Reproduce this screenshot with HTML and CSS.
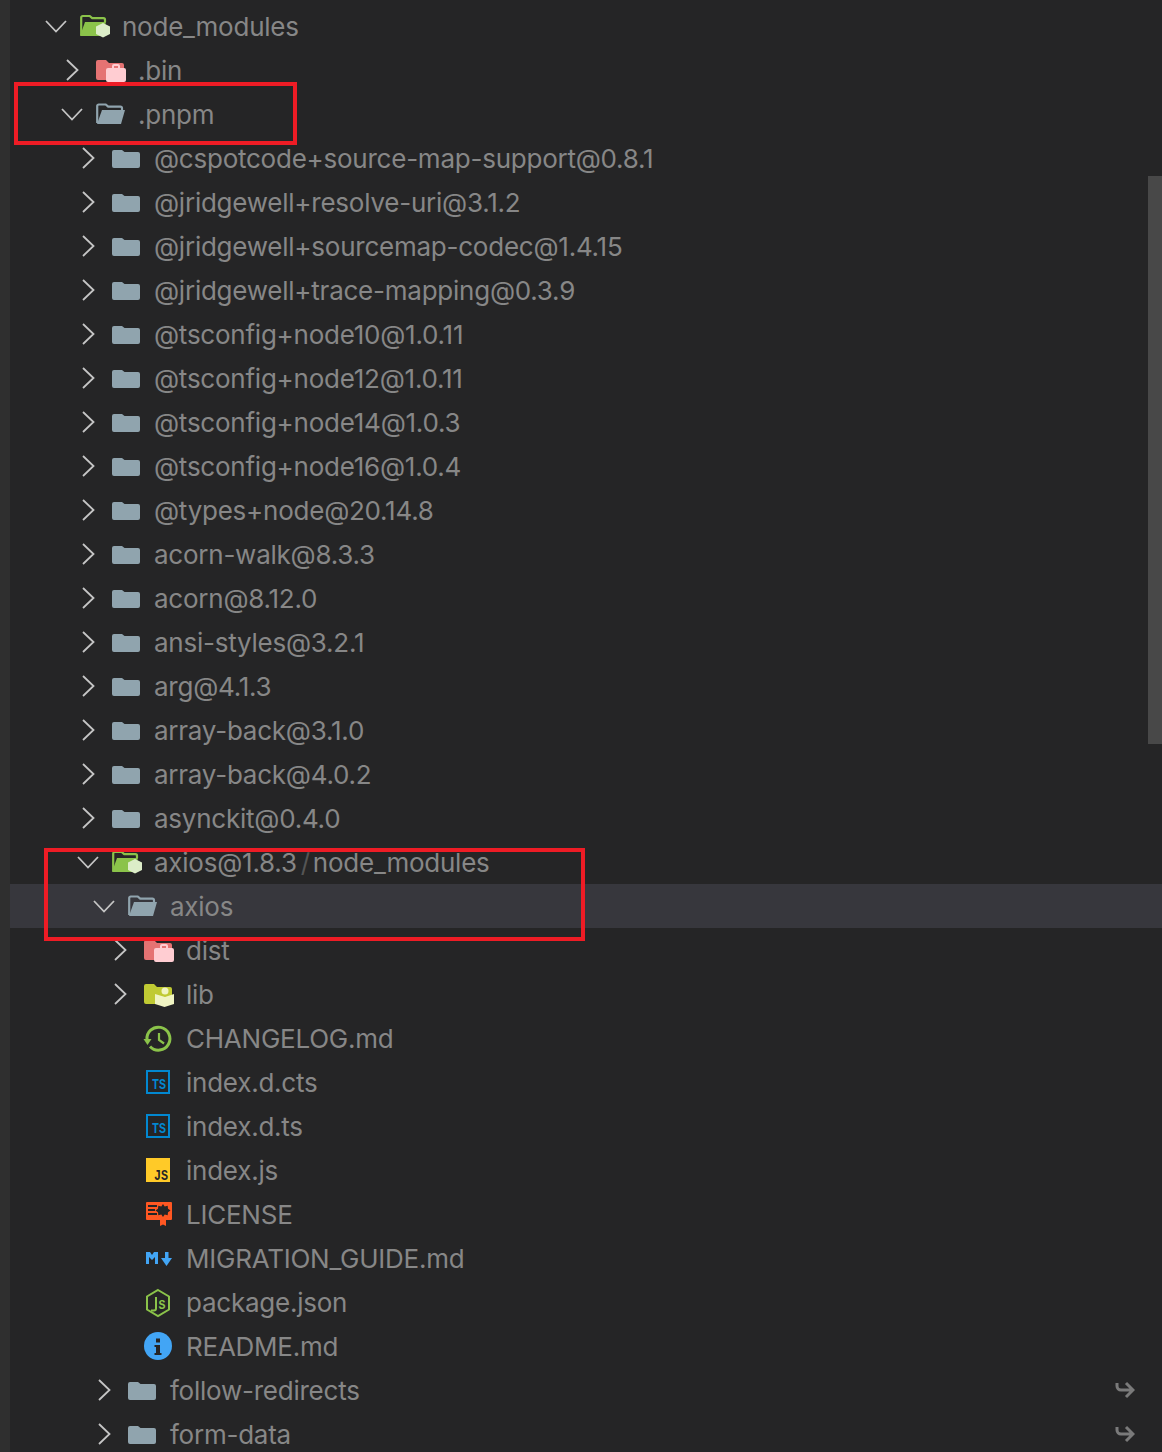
FILE: index.html
```html
<!DOCTYPE html>
<html lang="en">
<head>
<meta charset="utf-8">
<title>Explorer</title>
<link rel="stylesheet" href="styles.css">
</head>
<body>
<svg class="defs" width="0" height="0" aria-hidden="true">
  <symbol id="chev-r" viewBox="0 0 24 24"><path d="M7 2l10.500 10L7 22" fill="none" stroke="currentColor" stroke-width="1.800"/></symbol>
  <symbol id="chev-d" viewBox="0 0 24 24"><path d="M2 7l10 10.500L22 7" fill="none" stroke="currentColor" stroke-width="1.800"/></symbol>
  <symbol id="folder" viewBox="0 0 32 32"><path d="M4 8h8l2.500 2H28a2 2 0 0 1 2 2v12a2 2 0 0 1-2 2H4a2 2 0 0 1-2-2V10a2 2 0 0 1 2-2z" fill="#90a4ae"/></symbol>
  <symbol id="folder-open" viewBox="0 0 32 32"><path d="M3.200 25V8a1.500 1.500 0 0 1 1.500-1.500h7l2.500 2.200h12.300a1.500 1.500 0 0 1 1.500 1.500V12" fill="none" stroke="#90a4ae" stroke-width="2.200"/><path d="M8 12h23l-4 14H3z" fill="#90a4ae"/></symbol>
  <symbol id="node-open" viewBox="0 0 32 32"><path d="M3.200 25V7.500A1.500 1.500 0 0 1 4.700 6h7l2.500 2.200h11.300a1.500 1.500 0 0 1 1.500 1.500V12" fill="none" stroke="#8bc34a" stroke-width="2.200"/><path d="M7 12h21l-4 14H2z" fill="#8bc34a"/><path d="M25 13l7 3.500v7.500L25 27.500 18 24v-7.500z" fill="#dcedc8"/></symbol>
  <symbol id="folder-red" viewBox="0 0 32 32"><path d="M4 6h8l3 3h13a2 2 0 0 1 2 2v13a2 2 0 0 1-2 2H4a2 2 0 0 1-2-2V8a2 2 0 0 1 2-2z" fill="#e57373"/><path d="M18 14v-2a2 2 0 0 1 2-2h4a2 2 0 0 1 2 2v2h4a2 2 0 0 1 2 2v10a2 2 0 0 1-2 2H14a2 2 0 0 1-2-2V16a2 2 0 0 1 2-2zm2 0h4v-2h-4z" fill="#ffcdd2" fill-rule="evenodd"/></symbol>
  <symbol id="folder-lib" viewBox="0 0 32 32"><path d="M4 6h8l3 3h13a2 2 0 0 1 2 2v13a2 2 0 0 1-2 2H4a2 2 0 0 1-2-2V8a2 2 0 0 1 2-2z" fill="#c0ca33"/><path d="M13 16l10 3 9-3v10l-9.500 3L13 26z" fill="#f0f4c3"/><circle cx="23" cy="13" r="3.500" fill="#f0f4c3"/></symbol>
  <symbol id="history" viewBox="0 0 32 32"><path d="M5 18A11.500 11.500 0 1 1 8 24.500" fill="none" stroke="#8bc34a" stroke-width="3"/><path d="M1.500 17h8l-4 6z" fill="#8bc34a"/><path d="M17 11v7l5 3.500" fill="none" stroke="#8bc34a" stroke-width="2.200"/></symbol>
  <symbol id="ts-box" viewBox="0 0 32 32"><rect x="5" y="5" width="22" height="22" fill="none" stroke="#0288d1" stroke-width="2"/></symbol>
  <symbol id="js-box" viewBox="0 0 32 32"><rect x="4" y="4" width="24" height="24" fill="#ffca28"/></symbol>
  <symbol id="license" viewBox="0 0 32 32"><path d="M5 4h24a1 1 0 0 1 1 1v16a1 1 0 0 1-1 1h-5v6l-3-1.500-3 1.500v-6H5a1 1 0 0 1-1-1V5a1 1 0 0 1 1-1z" fill="#ff5722"/><path d="M6 7h9v2H6zm0 4h7v2H6zm0 4h9v2H6z" fill="#252526"/><path d="M21 6l1.700 2.500 3-.7.300 3 2.500 1.700-2.500 1.700-.3 3-3-.7L21 19l-1.700-2.500-3 .7-.3-3-2.500-1.700L16 10.800l.3-3 3 .7z" fill="#252526"/></symbol>
  <symbol id="md" viewBox="0 0 32 32"><path d="M4 10h4l2 3 2-3h4v12h-3v-7l-3 3-3-3v7H4z" fill="#42a5f5"/><path d="M23 10h3.500v6H30l-5.500 8-5.500-8h4z" fill="#42a5f5"/></symbol>
  <symbol id="pkg" viewBox="0 0 32 32"><path d="M16 4l11 6.500v13L16 30 5 23.500v-13z" fill="none" stroke="#8bc34a" stroke-width="2"/><path d="M14 11v11.500a2 2 0 0 1-2 2H9" fill="none" stroke="#8bc34a" stroke-width="2"/></symbol>
  <symbol id="info" viewBox="0 0 32 32"><circle cx="16" cy="16" r="14" fill="#42a5f5"/><rect x="14" y="8.500" width="4" height="4" fill="#252526"/><path d="M12.500 15H18v8h1.500v2h-7v-2H14v-6h-1.500z" fill="#252526"/></symbol>
  <symbol id="link" viewBox="0 0 20 18"><path d="M2 2v3a4 4 0 0 0 4 4h11M11 2l7 7-7 7" fill="none" stroke="currentColor" stroke-width="3"/></symbol>
</svg>

<div class="window">
  <div class="edge"></div>
  <ul class="tree">
    <li class="row d0"><svg class="chev"><use href="#chev-d"/></svg><svg class="icon"><use href="#node-open"/></svg><span class="name">node_modules</span></li>
    <li class="row d1"><svg class="chev"><use href="#chev-r"/></svg><svg class="icon"><use href="#folder-red"/></svg><span class="name">.bin</span></li>
    <li class="row d1"><svg class="chev"><use href="#chev-d"/></svg><svg class="icon"><use href="#folder-open"/></svg><span class="name">.pnpm</span></li>
    <li class="row d2"><svg class="chev"><use href="#chev-r"/></svg><svg class="icon"><use href="#folder"/></svg><span class="name">@cspotcode+source-map-support@0.8.1</span></li>
    <li class="row d2"><svg class="chev"><use href="#chev-r"/></svg><svg class="icon"><use href="#folder"/></svg><span class="name">@jridgewell+resolve-uri@3.1.2</span></li>
    <li class="row d2"><svg class="chev"><use href="#chev-r"/></svg><svg class="icon"><use href="#folder"/></svg><span class="name">@jridgewell+sourcemap-codec@1.4.15</span></li>
    <li class="row d2"><svg class="chev"><use href="#chev-r"/></svg><svg class="icon"><use href="#folder"/></svg><span class="name">@jridgewell+trace-mapping@0.3.9</span></li>
    <li class="row d2"><svg class="chev"><use href="#chev-r"/></svg><svg class="icon"><use href="#folder"/></svg><span class="name">@tsconfig+node10@1.0.11</span></li>
    <li class="row d2"><svg class="chev"><use href="#chev-r"/></svg><svg class="icon"><use href="#folder"/></svg><span class="name">@tsconfig+node12@1.0.11</span></li>
    <li class="row d2"><svg class="chev"><use href="#chev-r"/></svg><svg class="icon"><use href="#folder"/></svg><span class="name">@tsconfig+node14@1.0.3</span></li>
    <li class="row d2"><svg class="chev"><use href="#chev-r"/></svg><svg class="icon"><use href="#folder"/></svg><span class="name">@tsconfig+node16@1.0.4</span></li>
    <li class="row d2"><svg class="chev"><use href="#chev-r"/></svg><svg class="icon"><use href="#folder"/></svg><span class="name">@types+node@20.14.8</span></li>
    <li class="row d2"><svg class="chev"><use href="#chev-r"/></svg><svg class="icon"><use href="#folder"/></svg><span class="name">acorn-walk@8.3.3</span></li>
    <li class="row d2"><svg class="chev"><use href="#chev-r"/></svg><svg class="icon"><use href="#folder"/></svg><span class="name">acorn@8.12.0</span></li>
    <li class="row d2"><svg class="chev"><use href="#chev-r"/></svg><svg class="icon"><use href="#folder"/></svg><span class="name">ansi-styles@3.2.1</span></li>
    <li class="row d2"><svg class="chev"><use href="#chev-r"/></svg><svg class="icon"><use href="#folder"/></svg><span class="name">arg@4.1.3</span></li>
    <li class="row d2"><svg class="chev"><use href="#chev-r"/></svg><svg class="icon"><use href="#folder"/></svg><span class="name">array-back@3.1.0</span></li>
    <li class="row d2"><svg class="chev"><use href="#chev-r"/></svg><svg class="icon"><use href="#folder"/></svg><span class="name">array-back@4.0.2</span></li>
    <li class="row d2"><svg class="chev"><use href="#chev-r"/></svg><svg class="icon"><use href="#folder"/></svg><span class="name">asynckit@0.4.0</span></li>
    <li class="row d2"><svg class="chev"><use href="#chev-d"/></svg><svg class="icon"><use href="#node-open"/></svg><span class="name">axios@1.8.3<span class="sep">/</span>node_modules</span></li>
    <li class="row d3 selected"><svg class="chev"><use href="#chev-d"/></svg><svg class="icon"><use href="#folder-open"/></svg><span class="name">axios</span></li>
    <li class="row d4"><svg class="chev"><use href="#chev-r"/></svg><svg class="icon"><use href="#folder-red"/></svg><span class="name">dist</span></li>
    <li class="row d4"><svg class="chev"><use href="#chev-r"/></svg><svg class="icon"><use href="#folder-lib"/></svg><span class="name">lib</span></li>
    <li class="row d4"><span class="chev"></span><svg class="icon"><use href="#history"/></svg><span class="name">CHANGELOG.md</span></li>
    <li class="row d4"><span class="chev"></span><svg class="icon" viewBox="0 0 32 32"><use href="#ts-box"/><text class="glyph glyph-ts" x="10" y="23" textLength="14" lengthAdjust="spacingAndGlyphs">TS</text></svg><span class="name">index.d.cts</span></li>
    <li class="row d4"><span class="chev"></span><svg class="icon" viewBox="0 0 32 32"><use href="#ts-box"/><text class="glyph glyph-ts" x="10" y="23" textLength="14" lengthAdjust="spacingAndGlyphs">TS</text></svg><span class="name">index.d.ts</span></li>
    <li class="row d4"><span class="chev"></span><svg class="icon" viewBox="0 0 32 32"><use href="#js-box"/><text class="glyph glyph-js" x="12" y="26" textLength="14" lengthAdjust="spacingAndGlyphs">JS</text></svg><span class="name">index.js</span></li>
    <li class="row d4"><span class="chev"></span><svg class="icon"><use href="#license"/></svg><span class="name">LICENSE</span></li>
    <li class="row d4"><span class="chev"></span><svg class="icon"><use href="#md"/></svg><span class="name">MIGRATION_GUIDE.md</span></li>
    <li class="row d4"><span class="chev"></span><svg class="icon" viewBox="0 0 32 32"><use href="#pkg"/><text class="glyph glyph-pkg" x="16.500" y="23" textLength="7" lengthAdjust="spacingAndGlyphs">S</text></svg><span class="name">package.json</span></li>
    <li class="row d4"><span class="chev"></span><svg class="icon"><use href="#info"/></svg><span class="name">README.md</span></li>
    <li class="row d3"><svg class="chev"><use href="#chev-r"/></svg><svg class="icon"><use href="#folder"/></svg><span class="name">follow-redirects</span><svg class="link"><use href="#link"/></svg></li>
    <li class="row d3"><svg class="chev"><use href="#chev-r"/></svg><svg class="icon"><use href="#folder"/></svg><span class="name">form-data</span><svg class="link"><use href="#link"/></svg></li>
  </ul>
  <div class="scroll-thumb"></div>
  <div class="mark mark-pnpm"></div>
  <div class="mark mark-axios"></div>
</div>
</body>
</html>
```

FILE: styles.css
```css
* { box-sizing: border-box; }

html, body {
  margin: 0;
  height: 100%;
  overflow: hidden;
  background: #252526;
}

.defs { position: absolute; }

.window {
  position: relative;
  display: flex;
  width: 1162px;
  height: 1452px;
  overflow: hidden;
  background: #252526;
  font-family: "Inter", "Liberation Sans", sans-serif;
  font-size: 26px;
  letter-spacing: -0.24px;
  color: #878787;
}

.edge {
  flex: 0 0 10px;
  background: #2f2f2f;
}

.tree {
  flex: 1;
  min-width: 0;
  margin: 0;
  padding: 4px 0 0;
  list-style: none;
}

.row {
  display: flex;
  align-items: center;
  height: 44px;
  white-space: nowrap;
}

.d0 { padding-left: 34px; }
.d1 { padding-left: 50px; }
.d2 { padding-left: 66px; }
.d3 { padding-left: 82px; }
.d4 { padding-left: 98px; }

.selected { background: #37373d; }

.chev {
  flex: none;
  width: 24px;
  height: 24px;
  color: #c5c5c5;
}

.icon {
  flex: none;
  width: 32px;
  height: 32px;
  margin-left: 10px;
}

.name {
  margin-left: 12px;
  padding-top: 2px;
  line-height: 42px;
}

.sep {
  margin: 0 3px 0 4px;
  color: #555;
}

.glyph {
  font-family: "Liberation Mono", monospace;
  font-weight: 700;
  font-size: 15px;
  letter-spacing: 0;
}

.glyph-ts { fill: #0288d1; }
.glyph-js { fill: #252526; }
.glyph-pkg { fill: #8bc34a; font-size: 12px; }

.link {
  flex: none;
  width: 20px;
  height: 18px;
  margin-left: auto;
  margin-right: 27px;
  color: #7a7a7a;
}

.scroll-thumb {
  position: absolute;
  top: 176px;
  right: 0;
  width: 14px;
  height: 568px;
  background: #484848;
}

.mark {
  position: absolute;
  border: 4px solid #ee1c25;
}

.mark-pnpm {
  left: 14px;
  top: 82px;
  width: 283px;
  height: 63px;
}

.mark-axios {
  left: 44px;
  top: 848px;
  width: 541px;
  height: 93px;
}
```
